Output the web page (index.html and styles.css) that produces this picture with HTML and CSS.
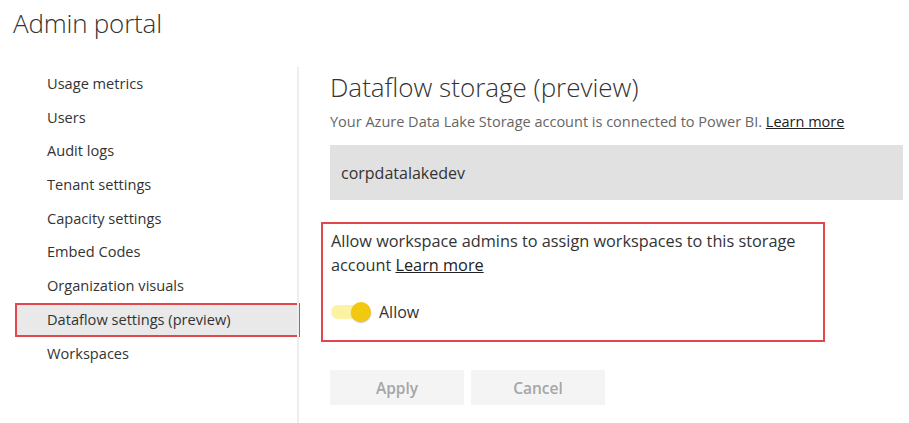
FILE: index.html
```html
<!DOCTYPE html>
<html lang="en">
<head>
<meta charset="utf-8">
<title>Admin portal</title>
<link rel="stylesheet" href="styles.css">
</head>
<body>
<div class="page">
  <h1 class="page-title">Admin portal</h1>
  <div class="layout">
    <nav class="sidebar">
      <a class="nav-item">Usage metrics</a>
      <a class="nav-item">Users</a>
      <a class="nav-item">Audit logs</a>
      <a class="nav-item">Tenant settings</a>
      <a class="nav-item">Capacity settings</a>
      <a class="nav-item">Embed Codes</a>
      <a class="nav-item">Organization visuals</a>
      <a class="nav-item selected">Dataflow settings (preview)</a>
      <a class="nav-item">Workspaces</a>
    </nav>
    <main class="content">
      <h2 class="section-title">Dataflow storage (preview)</h2>
      <p class="subtitle">Your Azure Data Lake Storage account is connected to Power BI. <a class="link">Learn more</a></p>
      <div class="account-box">corpdatalakedev</div>
      <div class="allow-box">
        <p class="allow-text">Allow workspace admins to assign workspaces to this storage account <a class="link">Learn more</a></p>
        <div class="toggle-row">
          <span class="toggle"><span class="knob"></span></span>
          <span class="toggle-label">Allow</span>
        </div>
      </div>
      <div class="buttons">
        <button class="btn">Apply</button>
        <button class="btn">Cancel</button>
      </div>
    </main>
  </div>
</div>
</body>
</html>
```

FILE: styles.css
```css
html, body {
  margin: 0;
  padding: 0;
  background: #ffffff;
}
body {
  font-family: "Segoe UI", "Open Sans", "Noto Sans", sans-serif;
  color: #333333;
}
.page {
  padding: 6px 0 0 0;
}
.page-title {
  margin: 0 0 0 13px;
  font-size: 26px;
  font-weight: 300;
  line-height: 34px;
  color: #333;
  letter-spacing: -0.2px;
}
.layout {
  display: flex;
  margin-top: 27px;
}
.sidebar {
  width: 284px;
  margin-left: 13px;
  display: flex;
  flex-direction: column;
  padding-top: 0;
}
.nav-item {
  display: block;
  height: 33.7px;
  line-height: 33px;
  padding-left: 34px;
  font-size: 14.6px;
  color: #333;
  white-space: nowrap;
}
.nav-item.selected {
  background: #e9e9e9;
  box-shadow: 0 0 0 2px #e0484e inset;
  margin-left: 2px;
  padding-left: 32px;
  margin-right: -3px;
}
.content {
  border-left: 2px solid #eeeeee;
  flex: 1;
  padding-left: 31px;
  padding-right: 6px;
  min-height: 360px;
}
.section-title {
  margin: 0;
  font-size: 26px;
  font-weight: 300;
  line-height: 34px;
  color: #333;
  margin-top: 3px;
}
.subtitle {
  margin: 8px 0 0 0;
  font-size: 14.5px;
  color: #666;
  line-height: 20px;
}
.link {
  color: #222;
  text-decoration: underline;
}
.account-box {
  margin-top: 13px;
  height: 55px;
  background: #e1e1e1;
  display: flex;
  align-items: center;
  padding-left: 11px;
  font-size: 16px;
  color: #333;
}
.allow-box {
  margin-top: 22px;
  margin-left: -9px;
  width: 484px;
  border: 2px solid #e0484e;
  padding: 5px 8px 17px 8px;
}
.allow-text {
  margin: 0;
  font-size: 16.3px;
  line-height: 24px;
  color: #333;
}
.toggle-row {
  display: flex;
  align-items: center;
  margin-top: 24px;
  gap: 8px;
}
.toggle {
  position: relative;
  width: 40px;
  height: 20px;
  display: inline-block;
}
.toggle::before {
  content: "";
  position: absolute;
  left: 0;
  top: 3px;
  width: 32px;
  height: 14px;
  border-radius: 7px;
  background: #fbf3a3;
}
.knob {
  position: absolute;
  right: 0;
  top: 0;
  width: 20px;
  height: 20px;
  border-radius: 50%;
  background: #f2c811;
  box-shadow: 0 1px 1px rgba(0,0,0,0.25);
}
.toggle-label {
  font-size: 16px;
  color: #333;
}
.buttons {
  display: flex;
  gap: 7px;
  margin-top: 28px;
}
.btn {
  width: 134px;
  height: 35px;
  border: none;
  background: #f4f4f4;
  color: #a6a6a6;
  font-family: inherit;
  font-size: 15.5px;
  font-weight: 600;
}
```
